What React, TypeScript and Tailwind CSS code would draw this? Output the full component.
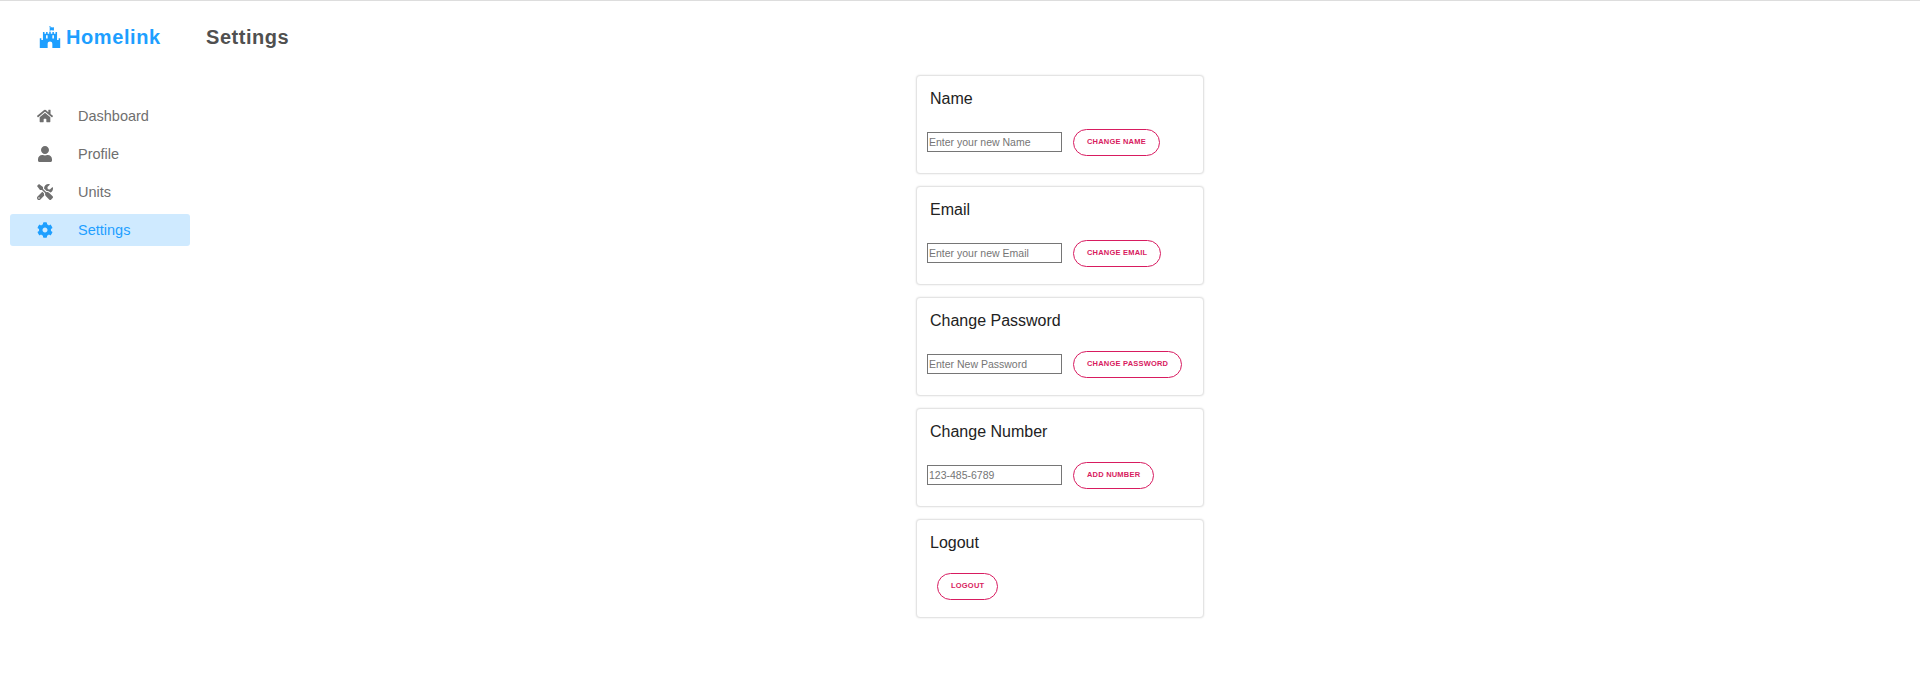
import { FaCog, FaFortAwesome, FaHome, FaTools, FaUser } from "react-icons/fa";

const navItems = [
  { label: "Dashboard", icon: FaHome },
  { label: "Profile", icon: FaUser },
  { label: "Units", icon: FaTools },
  { label: "Settings", icon: FaCog, active: true },
];

const cards = [
  { title: "Name", placeholder: "Enter your new Name", action: "Change Name" },
  { title: "Email", placeholder: "Enter your new Email", action: "Change Email" },
  { title: "Change Password", placeholder: "Enter New Password", action: "Change Password" },
  { title: "Change Number", placeholder: "123-485-6789", action: "Add Number" },
];

function ActionButton({ label, logout }: { label: string; logout?: boolean }) {
  return (
    <button
      className={`h-[27px] rounded-full border border-[#d81b60] bg-white px-[13px] pb-[1px] text-[7.5px] font-bold uppercase tracking-[0.2px] text-[#d81b60] ${
        logout ? "ml-[10px]" : "ml-[11px]"
      }`}
    >
      {label}
    </button>
  );
}

export default function App() {
  return (
    <div className="min-h-[687px] border-t border-[#dddddd] bg-white font-['Liberation_Sans',Arial,sans-serif]">
      {/* Header */}
      <header className="flex h-[74px] items-center pb-[3px]">
        <div className="ml-[39px] flex w-[167px] items-center gap-[5px] text-[#1e9fff]">
          <FaFortAwesome size={22} />
          <span className="text-[20px] font-bold tracking-[0.6px]">Homelink</span>
        </div>
        <h1 className="text-[20px] font-bold tracking-[0.55px] text-[#505050]">Settings</h1>
      </header>

      <div className="flex">
        {/* Sidebar */}
        <nav className="flex w-[200px] flex-col gap-[6px] px-[10px] pt-[25px]">
          {navItems.map(({ label, icon: Icon, active }) => (
            <a
              key={label}
              className={`flex h-[32px] items-center rounded-[3px] text-[14.5px] ${
                active ? "bg-[#cfeaff] text-[#1e9fff]" : "text-[#6f6f6f]"
              }`}
            >
              <span className="flex w-[68px] pl-[27px]">
                <Icon size={16} />
              </span>
              <span className="pt-[1px]">{label}</span>
            </a>
          ))}
        </nav>

        {/* Cards */}
        <main className="flex flex-1 justify-center">
          <div className="flex w-[288px] flex-col gap-[12px]">
            {cards.map((card) => (
              <section
                key={card.title}
                className="h-[99px] rounded-[4px] border border-[#e4e4e4] bg-white px-[10px] pt-[12px] shadow-[0_0_2px_rgba(0,0,0,0.12)]"
              >
                <h2 className="pl-[3px] text-[16px] leading-[22px] text-[#222222]">{card.title}</h2>
                <div className="mt-[19px] flex items-center">
                  <input
                    readOnly
                    placeholder={card.placeholder}
                    className="mb-[1px] h-[20px] w-[135px] border border-[#767676] px-[1px] pb-[1px] text-[10.5px] text-[#757575] placeholder:text-[#757575]"
                  />
                  <ActionButton label={card.action} />
                </div>
              </section>
            ))}
            <section className="h-[99px] rounded-[4px] border border-[#e4e4e4] bg-white px-[10px] pt-[12px] shadow-[0_0_2px_rgba(0,0,0,0.12)]">
              <h2 className="pl-[3px] text-[16px] leading-[22px] text-[#222222]">Logout</h2>
              <div className="mt-[19px] flex items-center">
                <ActionButton label="Logout" logout />
              </div>
            </section>
          </div>
        </main>
      </div>
    </div>
  );
}
